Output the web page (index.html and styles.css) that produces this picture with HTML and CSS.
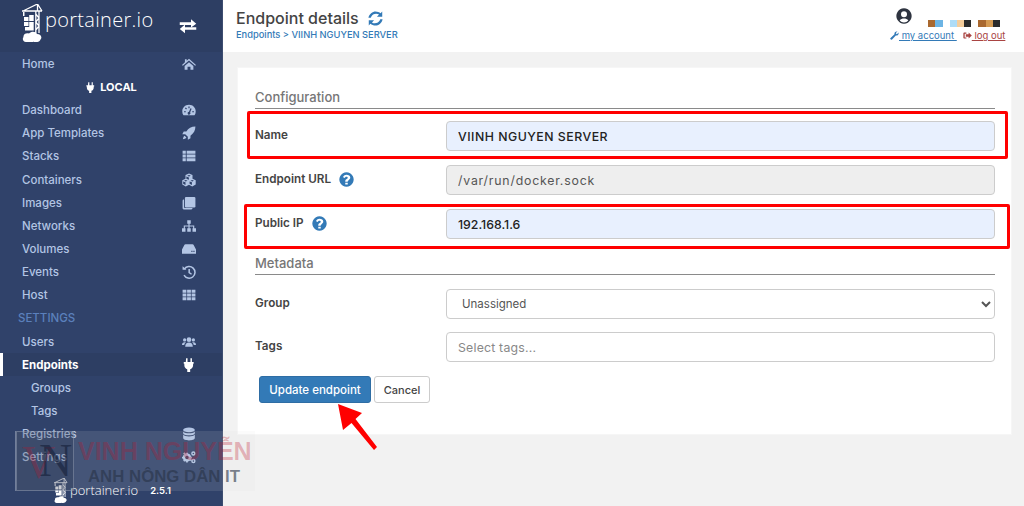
FILE: index.html
```html
<!DOCTYPE html>
<html lang="en">
<head>
<meta charset="utf-8">
<title>Endpoint details</title>
<link rel="stylesheet" href="styles.css">
</head>
<body>
<svg class="defs" width="0" height="0" aria-hidden="true">
  <defs>
    <symbol id="crane" viewBox="0 0 23 38">
      <path d="M0 7 H20 M15.500 0 V7 M15.500 0 L1 7 M15.500 0 L20 7 M13.800 7 V29 M17 7 V29 M13.800 10 L17 14 L13.800 18 L17 22 L13.800 26" fill="none" stroke="currentColor" stroke-width="1.300"/>
      <path d="M1 8 h1.500 v4 h-1.500z M2 13 h4.500 v4 h-4.500z M7.200 11 h4.500 v6 h-4.500z M2 18 h4.500 v4 h-4.500z M7.200 18 h4.500 v5 h-4.500z M3 23 h8.700 v3.500 h-8.700z" fill="currentColor"/>
      <path d="M4 38 C1 38 0 35 1.500 33 C1 30 4.500 28.500 7 29.500 C9.500 27 14 27.500 15 30 C19 30 20.500 33.500 18.500 35.500 C17.500 38 14 38.700 11.500 37.800 C9.500 38.700 6 38.700 4 38 Z" fill="currentColor"/>
    </symbol>
    <symbol id="i-home" viewBox="0 0 24 24"><path d="M12 3 L24 13.500 L22.500 15.200 L12 6.200 L1.500 15.200 L0 13.500 L5 9.200 V4 H8 V6.600 Z M4.500 15.500 L12 9 L19.500 15.500 V22 H14.500 V16.500 H9.500 V22 H4.500 Z"/></symbol>
    <symbol id="i-gauge" viewBox="0 0 24 24"><path fill-rule="evenodd" d="M12 3 C5.500 3 0.500 8 0.500 14.500 C0.500 16.800 1.100 18.900 2.200 20.600 C2.500 21 2.900 21 3.300 21 H20.700 C21.100 21 21.500 21 21.800 20.600 C22.900 18.900 23.500 16.800 23.500 14.500 C23.500 8 18.500 3 12 3 Z M11 6 h2 v3 h-2z M5 9 l1.500-1.500 2 2 -1.500 1.500z M3.500 14 h3 v2 h-3z M17.500 14 h3 v2 h-3z M14.500 9 l2 1 -2.500 6 a2.400 2.400 0 1 1 -2-1z"/></symbol>
    <symbol id="i-rocket" viewBox="0 0 24 24"><path d="M23 1 C16 1 11 4 7.500 9.500 H3 L0.500 14 H5.500 L10 18.500 V23.500 L14.500 21 V16.500 C20 13 23 8 23 1 Z M4.500 16.500 C2.500 17.500 2 20 1.500 22.500 C4 22 6.500 21.500 7.500 19.500 Z"/></symbol>
    <symbol id="i-list" viewBox="0 0 24 24"><path d="M1 3 h5.500 v5 h-5.500z M8 3 h15 v5 h-15z M1 9.500 h5.500 v5 h-5.500z M8 9.500 h15 v5 h-15z M1 16 h5.500 v5 h-5.500z M8 16 h15 v5 h-15z"/></symbol>
    <symbol id="i-cubes" viewBox="0 0 24 24"><path fill-rule="evenodd" d="M12 1 L18 3.500 V10 L23.500 12.500 V19.500 L17.500 23 L12 20 L6.500 23 L0.500 19.500 V12.500 L6 10 V3.500 Z M12 3.500 L9 4.700 L12 6 L15 4.700 Z M6.500 12.200 L3.600 13.400 L6.500 14.600 L9.400 13.400 Z M17.500 12.200 L14.600 13.400 L17.500 14.600 L20.400 13.400 Z M11.800 7.500 L7.500 5.800 V10 L11.800 11.700 Z M6 16 L2 14.400 V18.600 L6 20.600 Z M17 16 L13 14.400 V18.600 L17 20.600 Z" /></symbol>
    <symbol id="i-clone" viewBox="0 0 24 24"><path d="M7 1.500 h14 a2 2 0 0 1 2 2 v14 a2 2 0 0 1 -2 2 h-14 a2 2 0 0 1 -2 -2 v-14 a2 2 0 0 1 2 -2z"/><path d="M3.500 6 V19 a1.500 1.500 0 0 0 1.500 1.500 H18 V21 a2 2 0 0 1 -2 2 H3 a2 2 0 0 1 -2 -2 V8 a2 2 0 0 1 2 -2z"/></symbol>
    <symbol id="i-sitemap" viewBox="0 0 24 24"><path d="M9 2 h6 v6 h-6z M0 16 h6 v6 h-6z M9 16 h6 v6 h-6z M18 16 h6 v6 h-6z M11 8 h2 v3 h8 v5 h-2 v-3 h-6 v3 h-2 v-3 h-6 v3 h-2 v-5 h8z"/></symbol>
    <symbol id="i-hdd" viewBox="0 0 24 24"><path fill-rule="evenodd" d="M6 4 H18 C19 4 19.800 4.600 20.200 5.400 L24 13 V20 H0 V13 L3.800 5.400 C4.200 4.600 5 4 6 4 Z M16 15 h2 v2 h-2z M19.500 15 h2 v2 h-2z"/></symbol>
    <symbol id="i-history" viewBox="0 0 24 24"><path d="M2.600 3.400 L7.500 8.300 H1 V2 Z" /><path d="M4 7 A10 10 0 1 1 3.500 17.500" fill="none" stroke="currentColor" stroke-width="2.600"/><path d="M11 7 h2.600 v5.500 l3.500 2.400 -1.400 2 -4.700 -3.200z"/></symbol>
    <symbol id="i-th" viewBox="0 0 24 24"><path d="M1 3 h6.500 v5 h-6.500z M8.750 3 h6.500 v5 h-6.500z M16.500 3 h6.500 v5 h-6.500z M1 9.500 h6.500 v5 h-6.500z M8.750 9.500 h6.500 v5 h-6.500z M16.500 9.500 h6.500 v5 h-6.500z M1 16 h6.500 v5 h-6.500z M8.750 16 h6.500 v5 h-6.500z M16.500 16 h6.500 v5 h-6.500z"/></symbol>
    <symbol id="i-users" viewBox="0 0 24 24"><circle cx="12" cy="8" r="4"/><path d="M5.500 20 C5.500 15 8 13 12 13 C16 13 18.500 15 18.500 20 Z"/><circle cx="4.500" cy="8.500" r="2.800"/><circle cx="19.500" cy="8.500" r="2.800"/><path d="M0 17 C0 14 1.500 12.500 4.500 12.500 C5.300 12.500 6 12.600 6.600 12.900 C5 14 4.200 15.200 3.900 17 Z M24 17 C24 14 22.500 12.500 19.500 12.500 C18.700 12.500 18 12.600 17.400 12.900 C19 14 19.800 15.200 20.100 17 Z"/></symbol>
    <symbol id="i-plug" viewBox="0 0 24 24"><path d="M7 0.500 h2.500 v6.500 h5 v-6.500 h2.500 v6.500 h3 v3 h-1 v2.500 c0 3.500-2.200 6-5 6.700 v4.800 h-5 v-4.800 c-2.800-0.700-5-3.200-5-6.700 v-2.500 h-1 v-3 h3.500z"/></symbol>
    <symbol id="i-db" viewBox="0 0 24 24"><ellipse cx="12" cy="5" rx="10" ry="4"/><path d="M2 7.500 C3.500 10 8 10.800 12 10.800 C16 10.800 20.500 10 22 7.500 V11 C20.500 13.500 16 14.300 12 14.300 C8 14.300 3.500 13.500 2 11 Z M2 13 C3.500 15.500 8 16.300 12 16.300 C16 16.300 20.500 15.500 22 13 V19 C22 21.500 17 23 12 23 C7 23 2 21.500 2 19 Z"/></symbol>
    <symbol id="i-cogs" viewBox="0 0 24 24"><circle cx="8.500" cy="13" r="5" fill="none" stroke="currentColor" stroke-width="4"/><path d="M7 4.500 h3 v3 h-3z M7 18.500 h3 v3 h-3z M0 11.500 h3 v3 h-3z M14 11.500 h3 v3 h-3z M2 6 l2-2 2.500 2.500 -2 2z M12.500 16.500 l2-2 2.500 2.500 -2 2z M2 18 l2 2 2.500-2.500 -2-2z"/><circle cx="19.500" cy="6" r="2.600" fill="none" stroke="currentColor" stroke-width="2.400"/><circle cx="19.500" cy="19" r="2.600" fill="none" stroke="currentColor" stroke-width="2.400"/></symbol>
    <symbol id="i-swap" viewBox="0 0 24 24"><path d="M1 7 H16 V3 L23 9 L16 14 V10.500 H1 Z"/><path d="M23 13.500 H8 V10 L1 16 L8 21.500 V17 H23 Z"/></symbol>
    <symbol id="i-refresh" viewBox="0 0 24 24"><path d="M21.500 2 V9.500 H14 L17 6.500 C14 4.200 9 4.800 6.600 8.300 C6 9.200 5.600 10 5.300 11 H2 C3 5.500 8 2 12 2 C14.800 2 17.300 3 19.200 4.500 Z M2.500 22 V14.500 H10 L7 17.500 C10 19.800 15 19.200 17.400 15.700 C18 14.800 18.400 14 18.700 13 H22 C21 18.500 16 22 12 22 C9.200 22 6.700 21 4.800 19.500 Z"/></symbol>
    <symbol id="i-help" viewBox="0 0 24 24"><path fill-rule="evenodd" d="M12 0.500 A11.500 11.500 0 1 1 11.999 0.500 Z M10 17 v3 h4 v-3 z M12 4.500 C8.800 4.500 7 6.300 6.500 8.500 L9.400 9.500 C9.800 8.300 10.600 7.500 11.900 7.500 C13.100 7.500 14 8.100 14 9 C14 10 13.200 10.500 12.200 11.100 C11 11.900 10 12.700 10 14.500 V15.500 H14 V14.800 C14 14 14.700 13.600 15.500 13 C16.700 12.100 18 11.100 18 8.900 C18 6.200 15.300 4.500 12 4.500 Z"/></symbol>
    <symbol id="i-user" viewBox="0 0 24 24"><path fill-rule="evenodd" d="M12 0.500 A11.500 11.500 0 1 1 11.999 0.500 Z M12 5 A4.500 4.500 0 1 0 12.001 14 A4.500 4.500 0 1 0 12 5 Z M5.500 18.800 A9 9 0 0 0 18.500 18.800 C17 16.500 14.500 15.800 12 15.800 C9.500 15.800 7 16.500 5.500 18.800 Z"/></symbol>
    <symbol id="i-wrench" viewBox="0 0 24 24"><path d="M23 6 C23 10 19.500 13 15.500 12 L5.500 22.500 C4.300 23.700 2.500 23.300 1.500 22.300 C0.500 21.300 0.300 19.700 1.500 18.500 L12 8.500 C11 4.500 14 1 18 1 C18.800 1 19.500 1.100 20 1.400 L15.500 5.500 L16.500 7.500 L18.500 8.500 L22.600 4 C22.900 4.500 23 5.200 23 6 Z"/></symbol>
    <symbol id="i-out" viewBox="0 0 24 24"><path d="M9 4 H4 C2 4 1 5 1 7 V17 C1 19 2 20 4 20 H9 V17 H4.500 V7 H9 Z"/><path d="M15 4 L23.500 12 L15 20 V15.500 H7.500 V8.500 H15 Z"/></symbol>
  </defs>
</svg>

<div class="app">
  <aside class="sidebar">
    <div class="brand">
      <div class="brand-logo">
        <svg class="crane"><use href="#crane"/></svg>
        <span class="brand-text">portainer.io</span>
      </div>
      <svg class="brand-toggle"><use href="#i-swap"/></svg>
    </div>
    <nav class="nav">
      <a class="nav-row"><span>Home</span><svg class="nav-icon"><use href="#i-home"/></svg></a>
      <div class="nav-row nav-local"><svg class="local-icon"><use href="#i-plug"/></svg><span>LOCAL</span></div>
      <a class="nav-row"><span>Dashboard</span><svg class="nav-icon"><use href="#i-gauge"/></svg></a>
      <a class="nav-row"><span>App Templates</span><svg class="nav-icon"><use href="#i-rocket"/></svg></a>
      <a class="nav-row"><span>Stacks</span><svg class="nav-icon"><use href="#i-list"/></svg></a>
      <a class="nav-row"><span>Containers</span><svg class="nav-icon"><use href="#i-cubes"/></svg></a>
      <a class="nav-row"><span>Images</span><svg class="nav-icon"><use href="#i-clone"/></svg></a>
      <a class="nav-row"><span>Networks</span><svg class="nav-icon"><use href="#i-sitemap"/></svg></a>
      <a class="nav-row"><span>Volumes</span><svg class="nav-icon"><use href="#i-hdd"/></svg></a>
      <a class="nav-row"><span>Events</span><svg class="nav-icon"><use href="#i-history"/></svg></a>
      <a class="nav-row"><span>Host</span><svg class="nav-icon"><use href="#i-th"/></svg></a>
      <div class="nav-row nav-heading"><span>SETTINGS</span></div>
      <a class="nav-row"><span>Users</span><svg class="nav-icon"><use href="#i-users"/></svg></a>
      <a class="nav-row nav-active"><span>Endpoints</span><svg class="nav-icon"><use href="#i-plug"/></svg></a>
      <a class="nav-row nav-sub"><span>Groups</span></a>
      <a class="nav-row nav-sub"><span>Tags</span></a>
      <a class="nav-row"><span>Registries</span><svg class="nav-icon"><use href="#i-db"/></svg></a>
      <a class="nav-row"><span>Settings</span><svg class="nav-icon"><use href="#i-cogs"/></svg></a>
    </nav>
    <div class="side-foot">
      <svg class="foot-crane"><use href="#crane"/></svg>
      <span class="foot-text">portainer.io</span>
      <span class="foot-version">2.5.1</span>
    </div>
  </aside>

  <main class="main">
    <header class="topbar">
      <div class="crumbs">
        <div class="page-title"><span>Endpoint details</span><svg class="refresh"><use href="#i-refresh"/></svg></div>
        <div class="breadcrumb">Endpoints &gt; VIINH NGUYEN SERVER</div>
      </div>
      <div class="account">
        <div class="account-top">
          <svg class="user-icon"><use href="#i-user"/></svg>
          <div class="pixels">
            <i class="px c1"></i><i class="px c2"></i><i class="px gap"></i><i class="px c3"></i><i class="px c4"></i><i class="px c5"></i><i class="px gap"></i><i class="px c1"></i><i class="px c6"></i><i class="px c5"></i>
          </div>
        </div>
        <div class="account-links">
          <a class="link-blue"><svg class="link-icon"><use href="#i-wrench"/></svg><u>&nbsp;my account&nbsp;</u></a>
          <a class="link-red"><svg class="link-icon"><use href="#i-out"/></svg><u>&nbsp;log out</u></a>
        </div>
      </div>
    </header>

    <div class="content">
      <section class="card">
        <form class="form">
          <h3 class="section-title">Configuration</h3>
          <div class="field">
            <label class="field-label">Name</label>
            <input class="input input-fill input-strong input-name" type="text" value="VIINH NGUYEN SERVER">
          </div>
          <div class="field">
            <label class="field-label">Endpoint URL <svg class="help"><use href="#i-help"/></svg></label>
            <input class="input input-off" type="text" value="/var/run/docker.sock" disabled>
          </div>
          <div class="field">
            <label class="field-label">Public IP <svg class="help"><use href="#i-help"/></svg></label>
            <input class="input input-fill input-strong" type="text" value="192.168.1.6">
          </div>
          <h3 class="section-title section-second">Metadata</h3>
          <div class="field field-group">
            <label class="field-label">Group</label>
            <select class="input select"><option>Unassigned</option></select>
          </div>
          <div class="field">
            <label class="field-label">Tags</label>
            <input class="input input-tags" type="text" placeholder="Select tags...">
          </div>
          <div class="actions">
            <button class="btn btn-primary" type="button">Update endpoint</button>
            <button class="btn btn-default" type="button">Cancel</button>
          </div>
        </form>
      </section>
    </div>
  </main>
</div>

<div class="mark mark-name"></div>
<div class="mark mark-ip"></div>
<svg class="arrow" viewBox="0 0 42 50"><path d="M1 1 L25 10 L18.500 16 L40 44 L37 47 L14.500 20 L6 27 Z" fill="#f00"/></svg>

<div class="watermark">
  <div class="wm-logo"><span class="wm-v">V</span><span class="wm-n">N</span></div>
  <div class="wm-name">VINH NGUYỄN</div>
  <div class="wm-sub">ANH NÔNG DÂN IT</div>
</div>
</body>
</html>
```
FILE: styles.css
```css
* { box-sizing: border-box; }
html, body { margin: 0; height: 506px; overflow: hidden; }
body { position: relative; font-family: Inter, "Noto Sans", sans-serif; color: #333; background: #f2f2f2; }
.defs { position: absolute; }
svg { fill: currentColor; }

.app { display: flex; height: 506px; }
.sidebar { width: 223px; flex: none; display: flex; flex-direction: column; background: #30426a; border-right: 1px solid #3d4d70; color: #b3c5e4; }

.brand { height: 52px; flex: none; display: flex; align-items: flex-start; justify-content: space-between; padding: 4px 25px 0 22px; background: #2d3e63; color: #fff; }
.brand-logo { display: flex; align-items: flex-start; }
.crane { width: 23px; height: 38px; }
.brand-text { font-family: "Open Sans", sans-serif; font-size: 20px; font-weight: 300; line-height: 26px; margin-top: 3px; letter-spacing: .3px; }
.brand-toggle { width: 18px; height: 18px; margin-top: 13px; }

.nav { display: flex; flex-direction: column; padding-top: .3px; }
.nav-row { height: 23.150px; flex: none; display: flex; align-items: center; justify-content: space-between; padding: 0 26px 0 22px; font-size: 11.500px; font-weight: 500; }
.nav-icon { width: 14px; height: 14px; }
.nav-local { justify-content: center; gap: 4px; padding: 0; color: #fff; font-weight: 700; font-size: 11px; }
.local-icon { width: 11px; height: 13px; }
.nav-heading { padding-left: 18px; color: #5b80bc; font-size: 11.500px; }
.nav-active { background: #2d3e63; color: #fff; font-weight: 700; border-left: 3px solid #fff; padding-left: 19px; }
.nav-sub { padding-left: 31px; }

.side-foot { display: flex; align-items: center; margin-top: 9px; padding-left: 54px; color: #fff; }
.foot-crane { width: 15px; height: 25px; }
.foot-text { font-family: "Open Sans", sans-serif; font-size: 13px; font-weight: 300; margin-left: 1px; }
.foot-version { font-size: 9.500px; font-weight: 600; margin-left: 12px; }

.main { flex: 1; min-width: 0; display: flex; flex-direction: column; }
.topbar { height: 52px; flex: none; background: #fff; display: flex; justify-content: space-between; padding: 9px 19px 0 13px; }
.page-title { display: flex; align-items: center; gap: 8px; font-size: 16px; line-height: 18px; font-weight: 500; color: #444; }
.refresh { width: 17px; height: 17px; color: #337ab7; }
.breadcrumb { margin-top: 2px; font-size: 9.300px; line-height: 12px; font-weight: 500; color: #337ab7; }

.account { width: 115px; display: flex; flex-direction: column; font-size: 9.500px; }
.account-top { display: flex; height: 19px; padding-left: 6px; }
.user-icon { width: 16px; height: 16px; margin-top: -1px; color: #2e3440; }
.pixels { display: flex; margin: 11px 0 0 16px; }
.px { display: block; width: 7.300px; height: 7px; }
.gap { width: 7px; }
.c1 { background: #a9682f; }
.c2 { background: #6cb4e4; }
.c3 { background: #aedcf7; }
.c4 { background: #f5cd9b; }
.c5 { background: #2b2b2b; }
.c6 { background: #d49a52; }
.account-links { display: flex; align-items: center; gap: 6px; margin-top: 2px; white-space: nowrap; }
.link-blue { color: #337ab7; }
.link-red { color: #a94442; }
.link-icon { width: 9px; height: 9px; vertical-align: -1px; }

.content { flex: 1; padding: 15px 12px 0 14px; }
.card { height: 368px; background: #fff; border: 1px solid #f6f6f6; padding: 0 16px 0 17px; }
.form { display: flex; flex-direction: column; }
.section-title { margin: 0; height: 41px; display: flex; align-items: flex-end; padding-bottom: 3px; border-bottom: 1px solid #8a8a8a; font-size: 13px; font-weight: 500; color: #767676; }
.section-second { height: 22px; }
.section-title + .field { margin-top: 14px; }
.section-title:first-child + .field { margin-top: 12px; }
.field { display: grid; grid-template-columns: 191px 1fr; align-items: center; margin-bottom: 14px; }
.field-group { margin-bottom: 13px; }
.field-label { display: flex; align-items: center; gap: 8px; font-size: 11.700px; font-weight: 600; color: #444; padding-bottom: 2px; }
.help { width: 15px; height: 15px; color: #337ab7; }
.input { width: 100%; height: 30px; padding: 0 11px; border: 1px solid #ccc; border-radius: 4px; background: #fff; font-family: inherit; font-size: 12.300px; color: #555; }
.input::placeholder { color: #888; }
.input-fill { background: #e8f0fe; }
.input-strong { color: #222; font-weight: 500; }
.input-name { letter-spacing: .5px; }
.input-tags { letter-spacing: .2px; }
.input-off { background: #eee; color: #555; opacity: 1; letter-spacing: .8px; }
.select { padding-left: 11px; font-size: 11.500px; }
.actions { display: flex; gap: 3px; padding-left: 4px; }
.btn { height: 27px; border-radius: 3px; font-family: inherit; font-size: 11.500px; font-weight: 500; padding: 0; }
.btn-primary { width: 112px; background: #337ab7; border: 1px solid #2e6da4; color: #fff; }
.btn-default { width: 56px; background: #fff; border: 1px solid #ccc; color: #444; font-size: 11px; }

.mark { position: absolute; border: 3px solid #f00; border-radius: 2px; }
.mark-name { left: 247px; top: 111px; width: 761px; height: 48px; }
.mark-ip { left: 244px; top: 204px; width: 766px; height: 45px; }
.arrow { position: absolute; left: 337px; top: 403px; width: 42px; height: 50px; }

.watermark { position: absolute; left: 15px; top: 431px; width: 240px; height: 60px; background: rgba(225, 225, 225, .12); border-left: 1px solid rgba(160, 170, 190, .5); }
.wm-logo { position: absolute; left: 0; top: 0; width: 58px; height: 60px; background: rgba(30, 40, 65, .22); border: 1px solid rgba(170, 180, 200, .4); font-family: "Liberation Serif", serif; font-size: 46px; line-height: 58px; }
.wm-v { position: absolute; left: 5px; top: 2px; color: rgba(190, 20, 40, .3); }
.wm-n { position: absolute; left: 22px; top: 0; color: rgba(20, 30, 55, .6); }
.wm-name { position: absolute; left: 62px; top: 6px; font-family: "Liberation Sans", sans-serif; font-weight: 700; font-size: 25px; line-height: 28px; white-space: nowrap; color: rgba(190, 20, 40, .3); }
.wm-sub { position: absolute; left: 72px; top: 36px; font-family: "Liberation Sans", sans-serif; font-weight: 700; font-size: 16.800px; line-height: 20px; white-space: nowrap; color: rgba(40, 50, 70, .6); }
```
